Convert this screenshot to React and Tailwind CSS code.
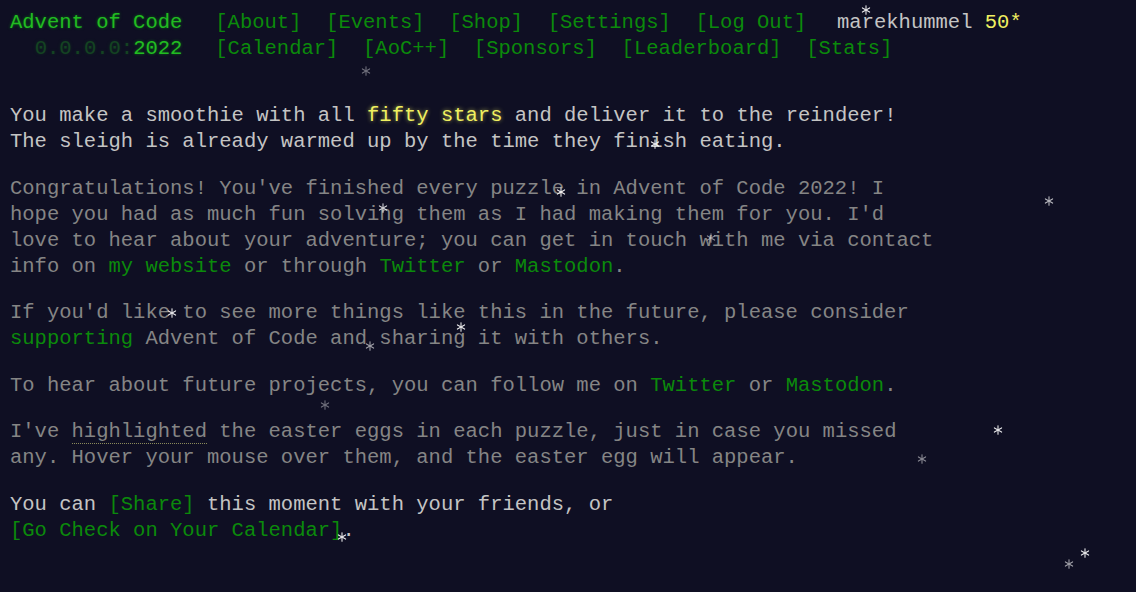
import React from "react";

const stars = [
  { x: 866, y: 10, o: "opacity-90" },
  { x: 366, y: 71, o: "opacity-40" },
  { x: 655, y: 144, o: "opacity-90" },
  { x: 561, y: 192, o: "opacity-90" },
  { x: 383, y: 208, o: "opacity-80" },
  { x: 1049, y: 201, o: "opacity-70" },
  { x: 711, y: 238, o: "opacity-50" },
  { x: 172, y: 313, o: "opacity-90" },
  { x: 461, y: 327, o: "opacity-90" },
  { x: 370, y: 346, o: "opacity-60" },
  { x: 325, y: 405, o: "opacity-40" },
  { x: 998, y: 430, o: "opacity-90" },
  { x: 922, y: 459, o: "opacity-50" },
  { x: 342, y: 537, o: "opacity-90" },
  { x: 1085, y: 553, o: "opacity-90" },
  { x: 1069, y: 564, o: "opacity-60" },
];

const Star = ({ x, y, o }) => (
  <svg
    width="10"
    height="10"
    viewBox="0 0 10 10"
    className={`absolute ${o}`}
    style={{ left: x - 5, top: y - 5 }}
  >
    <g stroke="#ffffff" strokeWidth="1.1" strokeLinecap="round">
      <line x1="5" y1="0.8" x2="5" y2="9.2" />
      <line x1="1.4" y1="2.9" x2="8.6" y2="7.1" />
      <line x1="1.4" y1="7.1" x2="8.6" y2="2.9" />
    </g>
  </svg>
);

const Link = ({ children }) => (
  <a href="#" className="text-[#0b8a0b] no-underline">
    {children}
  </a>
);

const navTop = ["[About]", "[Events]", "[Shop]", "[Settings]", "[Log Out]"];
const navBottom = ["[Calendar]", "[AoC++]", "[Sponsors]", "[Leaderboard]", "[Stats]"];

const glow = "[text-shadow:0_0_3px_rgba(0,204,0,0.5)]";

export default function App() {
  return (
    <div
      className="relative h-[592px] overflow-hidden bg-[#0f0f23] text-[#c4c4c4] text-[20.53px] leading-[26px] px-[10px] pt-[10px]"
      style={{ fontFamily: '"Liberation Mono", "DejaVu Sans Mono", monospace' }}
    >
      {/* Header */}
      <header className="whitespace-pre">
        <div className="flex">
          <h1 className={`w-[8.4em] pr-[1em] box-content text-[1em] font-normal text-[#22bb22] ${glow}`}>
            Advent of Code
          </h1>
          <ul className="flex">
            {navTop.map((n) => (
              <li key={n} className="px-[0.6em]">
                <Link>{n}</Link>
              </li>
            ))}
          </ul>
          <div className="pl-[0.9em]">
            marekhummel <span className="text-[#f0f060]">50*</span>
          </div>
        </div>
        <div className="flex">
          <h1 className={`w-[8.4em] pr-[1em] box-content text-right text-[1em] font-normal text-[#22bb22] ${glow}`}>
            <span className="opacity-30">0.0.0.0:</span>2022
          </h1>
          <ul className="flex">
            {navBottom.map((n) => (
              <li key={n} className="px-[0.6em]">
                <Link>{n}</Link>
              </li>
            ))}
          </ul>
        </div>
      </header>

      {/* Main */}
      <main className="mt-[41px] whitespace-pre flex flex-col gap-[20.5px]">
        <p>
          You make a smoothie with all{" "}
          <span className="text-[#f0f060] [text-shadow:0_0_4px_rgba(255,255,102,0.6)]">fifty stars</span> and deliver it to the reindeer!
          {"\n"}The sleigh is already warmed up by the time they finish eating.
        </p>
        <p className="text-[#858585]">
          Congratulations! You've finished every puzzle in Advent of Code 2022! I
          {"\n"}hope you had as much fun solving them as I had making them for you. I'd
          {"\n"}love to hear about your adventure; you can get in touch with me via contact
          {"\n"}info on <Link>my website</Link> or through <Link>Twitter</Link> or <Link>Mastodon</Link>.
        </p>
        <p className="text-[#858585]">
          If you'd like to see more things like this in the future, please consider
          {"\n"}
          <Link>supporting</Link> Advent of Code and sharing it with others.
        </p>
        <p className="text-[#858585]">
          To hear about future projects, you can follow me on <Link>Twitter</Link> or <Link>Mastodon</Link>.
        </p>
        <p className="text-[#858585]">
          I've <span className="border-b border-dotted border-[#8a8a5a]">highlighted</span> the easter eggs in each puzzle, just in case you missed
          {"\n"}any. Hover your mouse over them, and the easter egg will appear.
        </p>
        <p>
          You can <Link>[Share]</Link> this moment with your friends, or
          {"\n"}
          <Link>[Go Check on Your Calendar]</Link>.
        </p>
      </main>

      {stars.map((s, i) => (
        <Star key={i} {...s} />
      ))}
    </div>
  );
}
